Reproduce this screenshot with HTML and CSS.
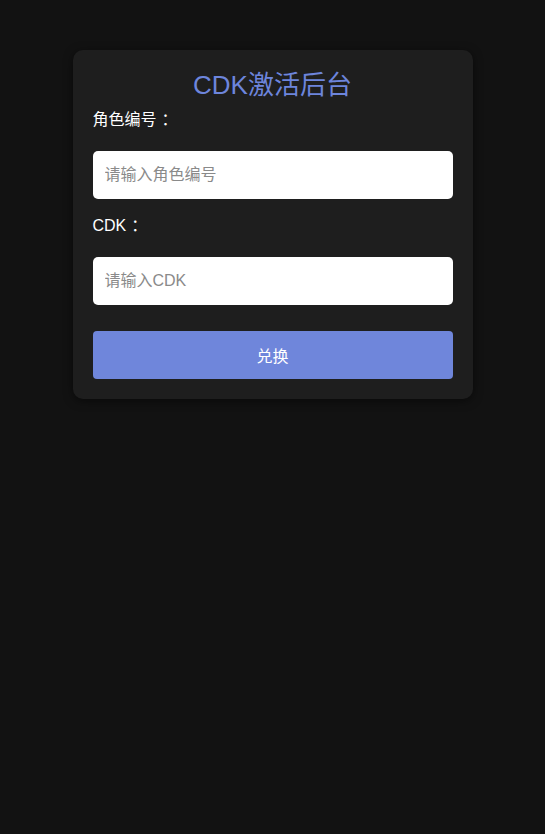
FILE: index.html
```html
<!DOCTYPE html>
<html lang="zh">
<head>
<meta charset="utf-8">
<title>CDK激活后台</title>
<link rel="stylesheet" href="styles.css">
</head>
<body>
<div class="page">
  <form class="card">
    <h1 class="title">CDK激活后台</h1>
    <label class="label" for="role">角色编号<span class="colon">：</span></label>
    <input class="input" id="role" type="text" placeholder="请输入角色编号">
    <label class="label" for="cdk">CDK<span class="colon">：</span></label>
    <input class="input" id="cdk" type="text" placeholder="请输入CDK">
    <button class="btn" type="button">兑换</button>
  </form>
</div>
</body>
</html>
```
FILE: styles.css
```css
html, body {
  margin: 0;
  padding: 0;
  background: #121212;
  font-family: "Liberation Sans", "Noto Sans CJK SC", sans-serif;
  color: #ffffff;
}
.page {
  display: flex;
  justify-content: center;
  align-items: flex-start;
  padding-top: 50px;
  min-height: 834px;
  box-sizing: border-box;
}
.card {
  width: 400px;
  box-sizing: border-box;
  padding: 20px 20px 20px;
  background: #1e1e1e;
  border-radius: 10px;
  box-shadow: 0 2px 10px rgba(0, 0, 0, 0.5);
  display: flex;
  flex-direction: column;
}
.title {
  margin: 0;
  font-size: 26px;
  font-weight: normal;
  line-height: 30px;
  text-align: center;
  color: #6d85dc;
}
.label {
  display: block;
  height: 18px;
  margin: 11px 0 22px;
  font-size: 16px;
  line-height: 18px;
  color: #ffffff;
}
.colon {
  margin-left: 5px;
}
.input {
  height: 48px;
  box-sizing: border-box;
  border: none;
  border-radius: 5px;
  background: #ffffff;
  padding: 0 12px;
  font-family: inherit;
  font-size: 16px;
  color: #333;
  outline: none;
  margin: 0 0 7px;
}
.input::placeholder {
  color: #8a8a8a;
}
.btn {
  margin-top: 19px;
  height: 48px;
  border: none;
  border-radius: 4px;
  background: #6f86db;
  color: #ffffff;
  font-family: inherit;
  font-size: 16px;
  cursor: pointer;
}
```
